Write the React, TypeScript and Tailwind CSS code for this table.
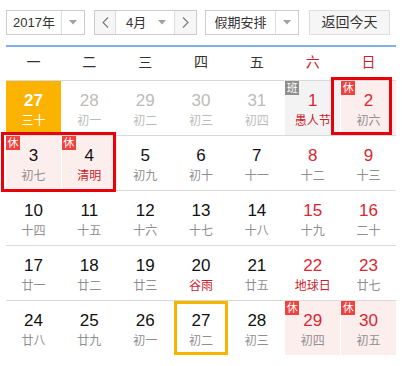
import React from 'react';

interface Cell {
  d: number;
  l: string;
  other?: boolean;
  today?: boolean;
  sel?: boolean;
  rest?: boolean;
  work?: boolean;
  red?: boolean;
  fest?: boolean;
}

const weeks: Cell[][] = [
  [
    { d: 27, l: '三十', today: true },
    { d: 28, l: '初一', other: true },
    { d: 29, l: '初二', other: true },
    { d: 30, l: '初三', other: true },
    { d: 31, l: '初四', other: true },
    { d: 1, l: '愚人节', red: true, fest: true, work: true },
    { d: 2, l: '初六', red: true, rest: true },
  ],
  [
    { d: 3, l: '初七', rest: true },
    { d: 4, l: '清明', rest: true, fest: true },
    { d: 5, l: '初九' },
    { d: 6, l: '初十' },
    { d: 7, l: '十一' },
    { d: 8, l: '十二', red: true },
    { d: 9, l: '十三', red: true },
  ],
  [
    { d: 10, l: '十四' },
    { d: 11, l: '十五' },
    { d: 12, l: '十六' },
    { d: 13, l: '十七' },
    { d: 14, l: '十八' },
    { d: 15, l: '十九', red: true },
    { d: 16, l: '二十', red: true },
  ],
  [
    { d: 17, l: '廿一' },
    { d: 18, l: '廿二' },
    { d: 19, l: '廿三' },
    { d: 20, l: '谷雨', fest: true },
    { d: 21, l: '廿五' },
    { d: 22, l: '地球日', red: true, fest: true },
    { d: 23, l: '廿七', red: true },
  ],
  [
    { d: 24, l: '廿八' },
    { d: 25, l: '廿九' },
    { d: 26, l: '初一' },
    { d: 27, l: '初二', sel: true },
    { d: 28, l: '初三' },
    { d: 29, l: '初四', red: true, rest: true },
    { d: 30, l: '初五', red: true, rest: true },
  ],
];

const weekdays = ['一', '二', '三', '四', '五', '六', '日'];

function Caret() {
  return (
    <svg width="8" height="5" viewBox="0 0 8 5">
      <path d="M0 0 L8 0 L4 4.5 Z" fill="#a0a0a0" />
    </svg>
  );
}

function Chevron({ dir }: { dir: 'l' | 'r' }) {
  return (
    <svg width="7" height="11" viewBox="0 0 7 11">
      <polyline
        points={dir === 'l' ? '6,0.5 1,5.5 6,10.5' : '1,0.5 6,5.5 1,10.5'}
        fill="none"
        stroke="#777"
        strokeWidth="1.1"
      />
    </svg>
  );
}

function DayCell({ c }: { c: Cell }) {
  let bg = 'bg-white';
  if (c.today) bg = 'bg-[#fbb300]';
  else if (c.rest) bg = 'bg-[#fdeeee]';
  else if (c.work) bg = 'bg-[#f3f3f3]';

  let num = 'text-[#111]';
  if (c.today) num = 'text-white font-bold';
  else if (c.other) num = 'text-[#bbbbbb]';
  else if (c.red) num = 'text-[#d92632]';

  let lunar = 'text-[#8f8f8f]';
  if (c.today) lunar = 'text-white';
  else if (c.other) lunar = 'text-[#bbbbbb]';
  else if (c.fest) lunar = 'text-[#c81d2c]';

  return (
    <div
      className={`relative h-[54px] flex flex-col items-center ${bg} ${
        c.sel ? 'border-[3px] border-[#f6b500] pt-[7px]' : 'pt-[10px]'
      }`}
    >
      {c.rest && (
        <span className="absolute top-0 left-0 w-[14px] h-[14px] bg-[#f2403c] text-white text-[11px] leading-[14px] text-center">
          休
        </span>
      )}
      {c.work && (
        <span className="absolute top-0 left-0 w-[14px] h-[14px] bg-[#8e8e8e] text-white text-[11px] leading-[14px] text-center">
          班
        </span>
      )}
      <div className={`text-[17px] leading-[20px] font-['Liberation_Sans',Arial,sans-serif] ${num}`}>{c.d}</div>
      <div className={`mt-[2px] text-[12px] leading-[16px] ${lunar}`}>{c.l}</div>
    </div>
  );
}

export default function App() {
  return (
    <div className="relative w-[402px] h-[366px] bg-white overflow-hidden font-['Liberation_Sans','Noto_Sans_CJK_SC',sans-serif] text-[#333]">
      {/* toolbar */}
      <div className="flex items-center h-[25px] mt-[10px] ml-[6px] text-[13px]">
        <div className="flex h-full w-[79px] border border-[#cccccc] bg-white">
          <div className="w-[55px] flex items-center justify-center border-r border-[#dddddd]">2017年</div>
          <div className="flex-1 flex items-center justify-center">
            <Caret />
          </div>
        </div>

        <div className="flex h-full w-[103px] ml-[9px] border border-[#cccccc] bg-white">
          <div className="w-[21px] flex items-center justify-center bg-[#f6f6f6] border-r border-[#dddddd]">
            <Chevron dir="l" />
          </div>
          <div className="flex-1 flex items-center justify-between pl-[10px] pr-[8px] border-r border-[#dddddd]">
            <span>4月</span>
            <Caret />
          </div>
          <div className="w-[21px] flex items-center justify-center bg-[#f6f6f6]">
            <Chevron dir="r" />
          </div>
        </div>

        <div className="flex h-full w-[94px] ml-[8px] border border-[#cccccc] bg-white">
          <div className="w-[70px] flex items-center justify-center border-r border-[#dddddd]">假期安排</div>
          <div className="flex-1 flex items-center justify-center">
            <Caret />
          </div>
        </div>

        <button className="h-full w-[81px] ml-[10px] border border-[#dddddd] bg-[#f6f6f6] text-[14px] text-[#333]">
          返回今天
        </button>
      </div>

      <div className="mx-[6px] mt-[10px] h-[2px] bg-[#7fb3e6]" />

      {/* week header */}
      <div className="grid grid-cols-7 gap-x-px mx-[6px] h-[33px] pb-[2px] text-[14px]">
        {weekdays.map((w, i) => (
          <div
            key={w}
            className={`flex items-center justify-center ${i >= 5 ? 'text-[#cc2030]' : 'text-[#333]'}`}
          >
            {w}
          </div>
        ))}
      </div>

      {/* days */}
      <div className="mx-[6px]">
        {weeks.map((row, r) => (
          <div key={r} className="grid grid-cols-7 gap-x-px border-t border-[#d9d9d9]">
            {row.map((c, i) => (
              <DayCell key={i} c={c} />
            ))}
          </div>
        ))}
      </div>

      {/* red annotation frames */}
      <div className="absolute left-[1px] top-[132px] w-[115px] h-[60px] border-[3px] border-[#e8000b]" />
      <div className="absolute left-[331px] top-[77px] w-[61px] h-[58px] border-[3px] border-[#e8000b]" />
    </div>
  );
}
